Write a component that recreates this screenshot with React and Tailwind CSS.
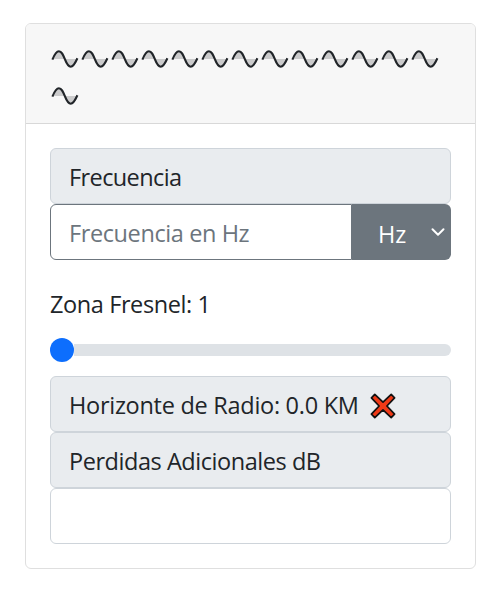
import React from "react";

function Wave() {
  return (
    <svg width="30" height="37" viewBox="0 0 30 37" className="block">
      <path d="M3 18C5 12 6.4 10.2 8.9 10.2S12.6 13 14.8 18ZM14.8 18C17 23.4 18.2 25.4 20.7 25.4S25 23 27 18Z" fill="#cbcbcc" />
      <path d="M2.4 18.6C4.8 12.6 6.4 10.2 8.9 10.2C11.6 10.2 12.9 13.4 14.8 18C16.6 22.5 18.2 25.7 20.7 25.7C23.4 25.7 25 22.7 27.4 17.3" fill="none" stroke="#212529" strokeWidth="2.1" />
    </svg>
  );
}

function Cross() {
  return (
    <svg width="26" height="26" viewBox="0 0 26 26" className="mt-px ml-[11px] block shrink-0">
      <path
        d="M4.8 1.4L13 9.1L21.2 1.4L24.6 4.8L16.9 13L24.6 21.2L21.2 24.6L13 16.9L4.8 24.6L1.4 21.2L9.1 13L1.4 4.8Z"
        fill="#f03a17"
        stroke="#111111"
        strokeWidth="1.7"
        strokeLinejoin="round"
      />
    </svg>
  );
}

const box = "flex h-14 items-center rounded-[6px] border border-[#ced4da] pt-[2px] pl-[18px]";

export default function App() {
  return (
    <div className="h-[604px] w-[502px] bg-white pt-[23px] pl-[25px] font-['Open_Sans','Noto_Sans',sans-serif] text-[23.5px] leading-9 text-[#212529]">
      <div className="h-[546px] w-[451px] overflow-hidden rounded-[6px] border border-[#dfdfdf]">
        <div className="flex h-[100px] flex-wrap content-start border-b border-[#d8d8d8] bg-[#f7f7f7] pt-[17px] pr-6 pl-6">
          {Array.from({ length: 14 }, (_, i) => (
            <Wave key={i} />
          ))}
        </div>
        <div className="flex flex-col px-6 pt-6">
          <div className={`${box} bg-[#e9ecef]`}>
            <span className="tracking-[-0.6px]">Frecuencia</span>
          </div>
          <div className="flex h-14">
            <input
              type="text"
              placeholder="Frecuencia en Hz"
              className="h-14 w-[302px] rounded-l-[6px] border border-[#6c757d] pt-[2px] pl-[18px] tracking-[-0.4px] outline-none placeholder:text-[#6c757d]"
            />
            <button className="flex h-14 w-[99px] items-center rounded-r-[6px] bg-[#6c757d] pt-[3px] pl-[26px] text-white">
              <span className="w-[51px] text-left">Hz</span>
              <svg width="16" height="16" viewBox="0 0 16 16" className="mb-[3px]" fill="none" stroke="white" strokeWidth="2" strokeLinecap="round" strokeLinejoin="round">
                <path d="M3.5 5.2L9 10.7L14.5 5.2" />
              </svg>
            </button>
          </div>
          <div className="mt-[26px] h-9 tracking-[-0.4px]">Zona Fresnel: 1</div>
          <div className="mt-4 flex h-6 items-center">
            <div className="size-6 shrink-0 rounded-full bg-[#0d6efd]" />
            <div className="-ml-3 h-3 grow rounded-r-full bg-[#dee2e6] [clip-path:inset(0_0_0_12px)]" />
          </div>
          <div className={`${box} mt-[14px] bg-[#e9ecef]`}>
            <span className="tracking-[-0.28px]">Horizonte de Radio: 0.0 KM</span>
            <Cross />
          </div>
          <div className={`${box} bg-[#e9ecef]`}>
            <span className="tracking-[-0.45px]">Perdidas Adicionales dB</span>
          </div>
          <div className={`${box} bg-white`} />
        </div>
      </div>
    </div>
  );
}
